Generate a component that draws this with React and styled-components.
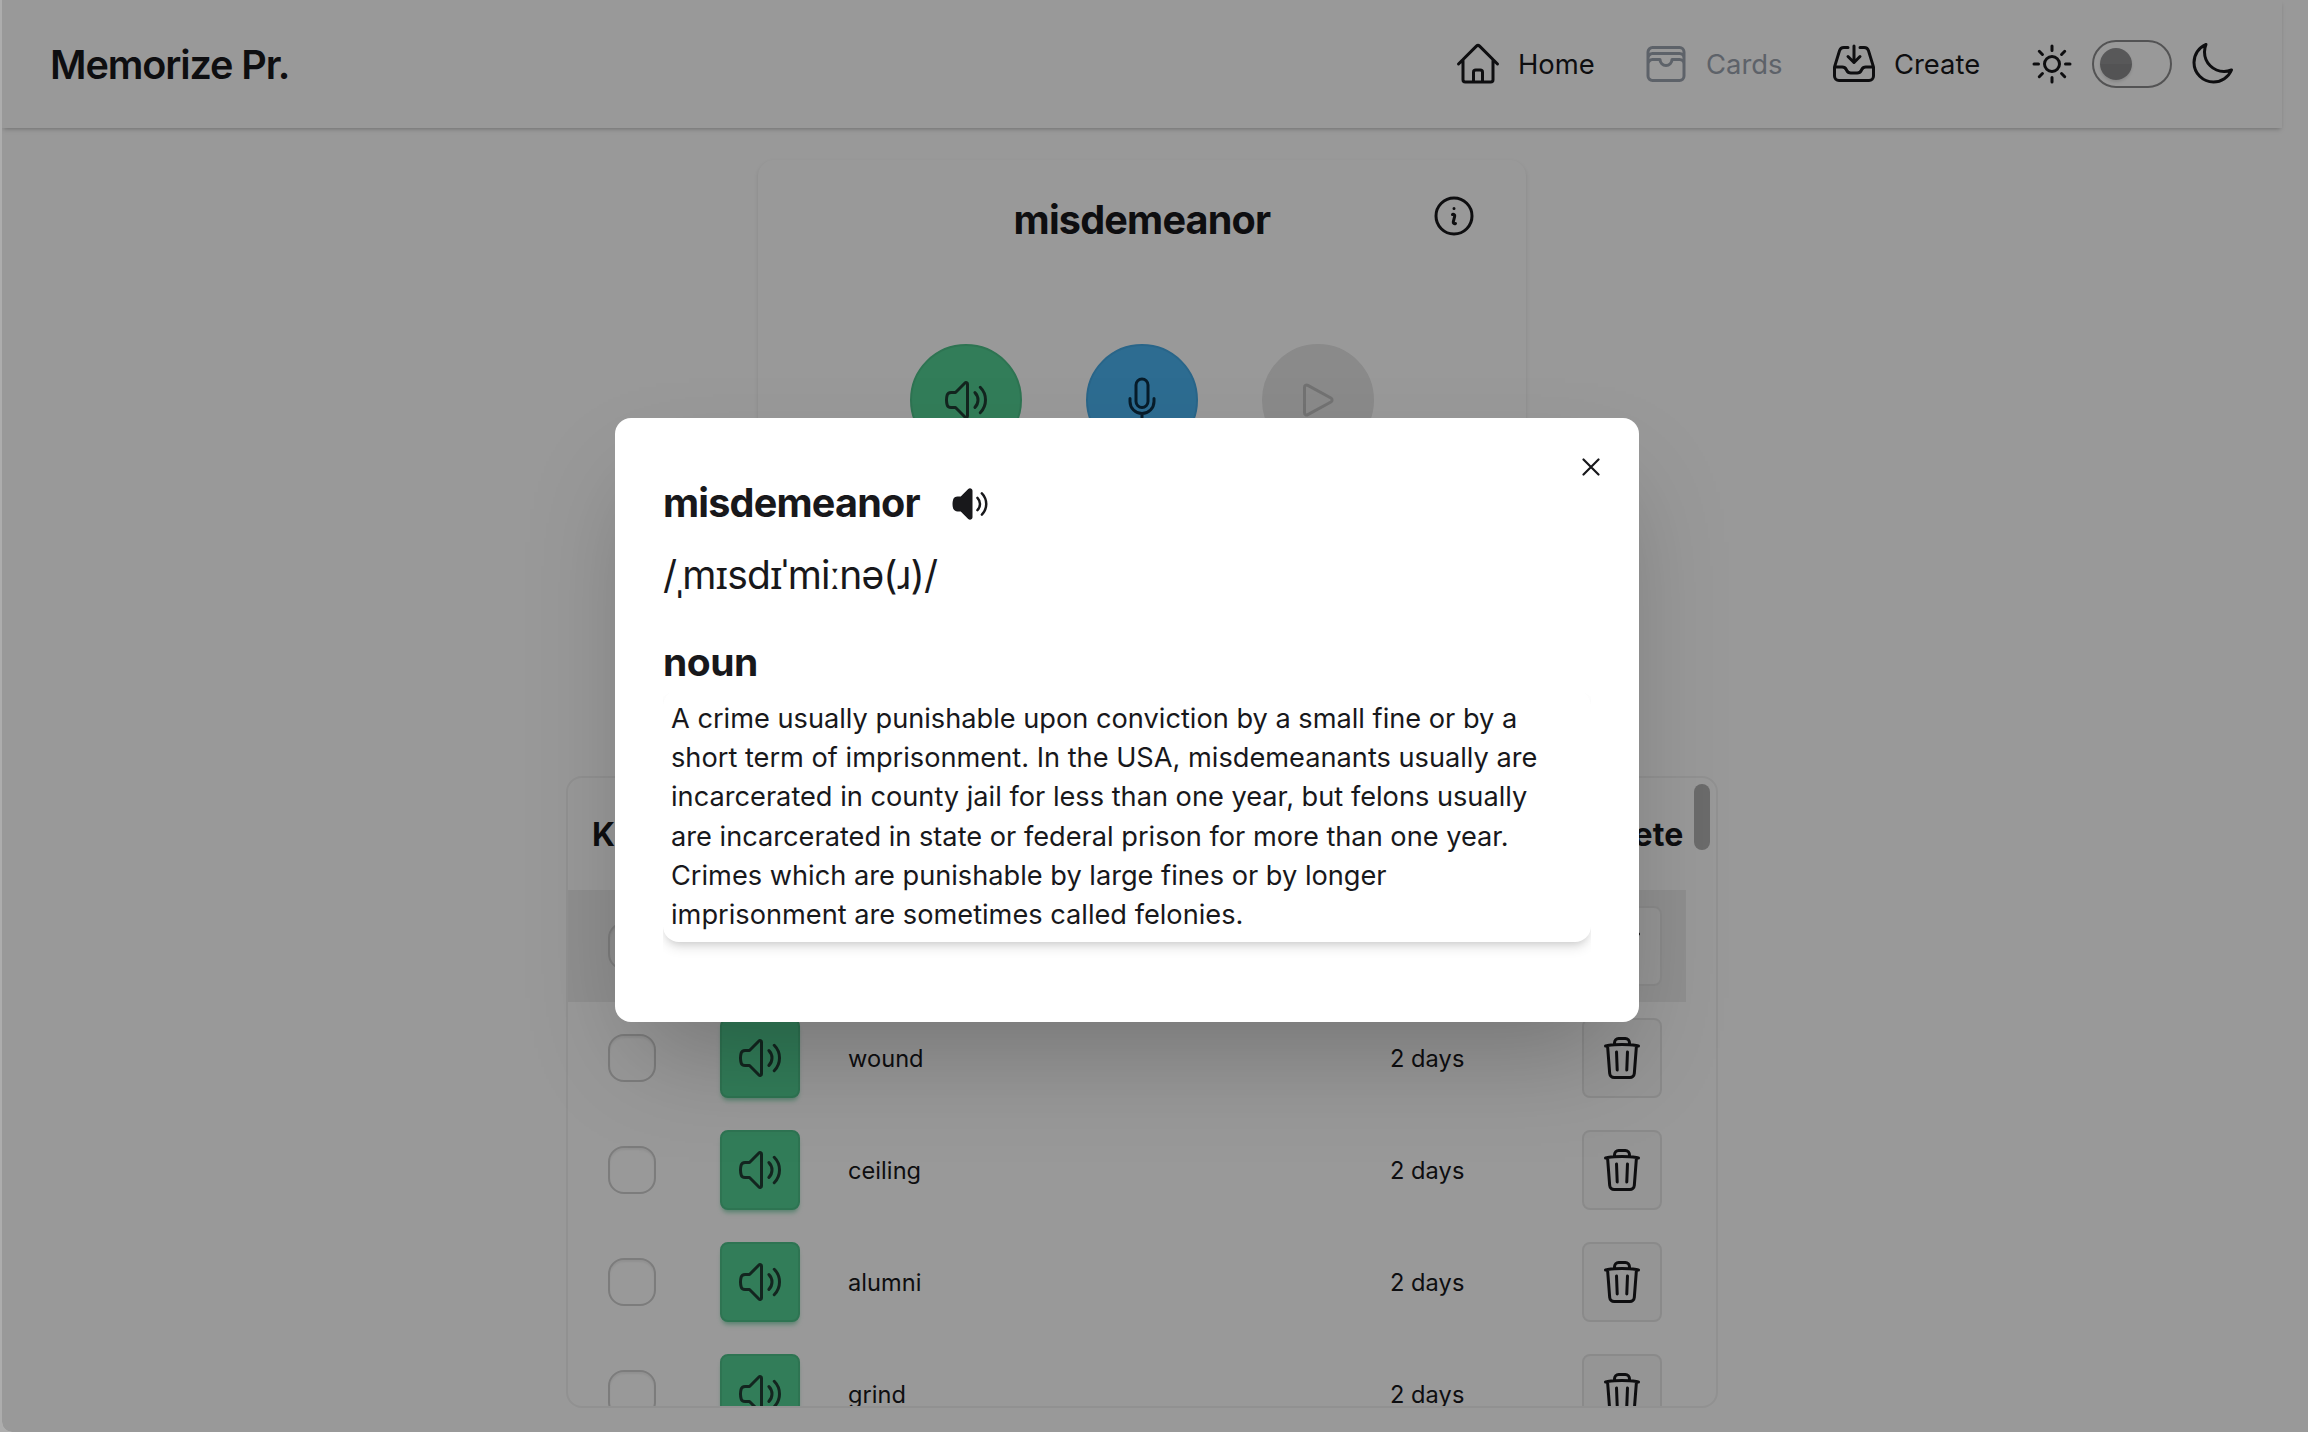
import React from "react";
import styled, { createGlobalStyle } from "styled-components";
import {
  HiOutlineHome,
  HiOutlineWallet,
  HiOutlineInboxArrowDown,
  HiOutlineSun,
  HiOutlineMoon,
  HiOutlineInformationCircle,
  HiOutlineSpeakerWave,
  HiOutlineMicrophone,
  HiOutlinePlay,
  HiOutlineTrash,
  HiSpeakerWave,
} from "react-icons/hi2";

const GlobalStyle = createGlobalStyle`
  *, *::before, *::after { box-sizing: border-box; }
  body {
    margin: 0;
    background: #adadad;
    color: #18181b;
    font-family: Inter, "Noto Sans", sans-serif;
    overflow: hidden;
  }
  h1, h2, h3, p { margin: 0; }
  button { font: inherit; color: inherit; padding: 0; }
  svg { display: block; flex: none; }
`;

const Window = styled.div`
  position: relative;
  margin-left: 2px;
  height: 1432px;
  overflow: hidden;
  background: #fff;
  border-bottom-left-radius: 10px;
`;

const Page = styled.div`
  width: 2280px;
  height: 100%;
  display: flex;
  flex-direction: column;
  align-items: center;
`;

const Navbar = styled.header`
  align-self: stretch;
  height: 128px;
  flex: none;
  display: flex;
  align-items: center;
  justify-content: space-between;
  padding: 0 46px 0 48px;
  box-shadow: 0 3px 5px -1px rgba(0, 0, 0, 0.12),
    0 2px 4px -2px rgba(0, 0, 0, 0.2);
`;

const Brand = styled.h1`
  padding-top: 2px;
  font-size: 39.6px;
  line-height: 56px;
  font-weight: 600;
  letter-spacing: -1.1px;
`;

const Menu = styled.nav`
  display: flex;
  align-items: center;
  gap: 48px;
`;

const MenuItem = styled.a`
  display: flex;
  align-items: center;
  gap: 16px;
  width: ${(p) => p.$width}px;
  white-space: nowrap;
  font-size: 27.4px;
  line-height: 40px;
  color: ${(p) => (p.$active ? "#9ca3af" : "inherit")};
`;

const ThemeSwitch = styled.div`
  display: flex;
  align-items: center;
  gap: 16px;
`;

const Toggle = styled.div`
  width: 80px;
  height: 48px;
  padding: 6px;
  border: 2px solid #8b8b8c;
  border-radius: 24px;
`;

const Knob = styled.div`
  width: 32px;
  height: 32px;
  border-radius: 50%;
  background: linear-gradient(#939395 50%, #8b8b8d 50%);
  box-shadow: 0 2px 3px rgba(0, 0, 0, 0.12);
`;

const WordCard = styled.section`
  width: 768px;
  height: 560px;
  flex: none;
  margin-top: 32px;
  padding: 32px 48px;
  border-radius: 16px;
  box-shadow: 0 2px 4px rgba(0, 0, 0, 0.12);
  display: flex;
  flex-direction: column;
`;

const WordHeader = styled.div`
  display: grid;
  grid-template-columns: 48px 1fr 48px;
  align-items: start;
  height: 152px;
`;

const Word = styled.h2`
  font-size: 39.6px;
  line-height: 56px;
  letter-spacing: -0.8px;
  font-weight: 700;
  text-align: center;
  grid-column: 2;
`;

const Actions = styled.div`
  display: flex;
  justify-content: center;
  gap: 64px;
`;

const tones = {
  success: ["#54d095", "#4dc189", "#213f34"],
  info: ["#4cb5f2", "#45a9e4", "#0d2f46"],
  disabled: ["#e6e6e6", "#e6e6e6", "#bebebe"],
  neutral: ["#f8f8f8", "#e7e7e7", "#18181b"],
};

const ToneButton = styled.button`
  display: flex;
  align-items: center;
  justify-content: center;
  background: ${(p) => tones[p.$tone][0]};
  border: 2px solid ${(p) => tones[p.$tone][1]};
  color: ${(p) => tones[p.$tone][2]};
`;

const RoundButton = styled(ToneButton)`
  width: 112px;
  height: 112px;
  border-radius: 50%;
`;

const SquareButton = styled(ToneButton)`
  width: 80px;
  height: 80px;
  border-radius: 8px;
  box-shadow: ${(p) =>
    p.$tone === "success"
      ? "0 5px 5px -2px rgba(84, 208, 149, 0.4), 0 3px 4px -2px rgba(60, 160, 112, 0.4)"
      : "none"};
`;

const ListCard = styled.section`
  width: 1152px;
  height: 632px;
  flex: none;
  margin-top: 56px;
  border: 2px solid #f2f2f2;
  border-radius: 16px;
  overflow: hidden;
  display: flex;
  justify-content: space-between;
`;

const Table = styled.div`
  width: 1118px;
`;

const HeadRow = styled.div`
  display: grid;
  grid-template-columns: 990px 128px;
  align-items: center;
  height: 112px;
  padding-left: 24px;
  font-size: 32px;
  letter-spacing: 0.2px;
  font-weight: 700;
`;

const Row = styled.div`
  display: grid;
  grid-template-columns: 128px 128px 542px 192px 128px;
  align-items: center;
  height: 112px;
  background: ${(p) => (p.$selected ? "#eeeeee" : "transparent")};
`;

const Cell = styled.div`
  padding-left: ${(p) => p.$inset ?? 24}px;
`;

const TextCell = styled(Cell)`
  padding-top: 2px;
  font-size: 23.6px;
  line-height: 32px;
  letter-spacing: 0.05px;
`;

const Check = styled.div`
  width: 48px;
  height: 48px;
  border: 2px solid #cfcfcf;
  border-radius: 16px;
  box-shadow: inset 0 2px 2px rgba(0, 0, 0, 0.06);
`;

const ScrollTrack = styled.div`
  width: 22px;
  padding-top: 6px;
`;

const ScrollThumb = styled.div`
  width: 16px;
  height: 66px;
  border-radius: 8px;
  background: #b2b2b2;
`;

const Backdrop = styled.div`
  position: absolute;
  inset: 0;
  background: rgba(0, 0, 0, 0.4);
  padding: 418px 0 0 613px;
`;

const Modal = styled.div`
  position: relative;
  width: 1024px;
  height: 604px;
  padding: 48px;
  background: #fff;
  border-radius: 16px;
  box-shadow: 0 50px 100px -24px rgba(0, 0, 0, 0.25);
`;

const CloseButton = styled.button`
  position: absolute;
  top: 17px;
  right: 16px;
  width: 64px;
  height: 64px;
  border: 0;
  background: none;
  display: flex;
  align-items: center;
  justify-content: center;
`;

const ModalTitle = styled.div`
  display: flex;
  align-items: flex-start;
  gap: 30px;
  height: 80px;
  padding-top: 9px;

  svg {
    margin-top: 9px;
  }
`;

const Phonetic = styled.p`
  padding-top: 1px;
  font-size: 39px;
  line-height: 56px;
  letter-spacing: -0.85px;
  white-space: nowrap;
`;

const PartOfSpeech = styled.h3`
  margin-top: 31px;
  font-size: 39px;
  line-height: 56px;
  letter-spacing: -0.5px;
  font-weight: 700;
`;

const DefinitionClip = styled.div`
  overflow: hidden;
  height: 280px;
`;

const Definition = styled.p`
  height: 252px;
  padding: 9px 30px 7px 8px;
  border-radius: 16px;
  font-size: 27.2px;
  line-height: 39.2px;
  box-shadow: 0 8px 12px -2px rgba(0, 0, 0, 0.1),
    0 4px 8px -4px rgba(0, 0, 0, 0.16);
`;

const rows = [
  { word: "", due: "", selected: true },
  { word: "wound", due: "2 days" },
  { word: "ceiling", due: "2 days" },
  { word: "alumni", due: "2 days" },
  { word: "grind", due: "2 days" },
];

function WordRow({ word, due, selected }) {
  return (
    <Row $selected={selected}>
      <Cell $inset={40}>
        <Check />
      </Cell>
      <Cell>
        <SquareButton $tone="success">
          <HiOutlineSpeakerWave size={48} />
        </SquareButton>
      </Cell>
      <TextCell>{word}</TextCell>
      <TextCell>{due}</TextCell>
      <Cell>
        <SquareButton $tone="neutral">
          <HiOutlineTrash size={48} />
        </SquareButton>
      </Cell>
    </Row>
  );
}

export default function App() {
  return (
    <>
      <GlobalStyle />
      <Window>
        <Page>
          <Navbar>
            <Brand>Memorize Pr.</Brand>
            <Menu>
              <MenuItem $width={140}>
                <HiOutlineHome size={48} />
                Home
              </MenuItem>
              <MenuItem $width={140} $active>
                <HiOutlineWallet size={48} />
                Cards
              </MenuItem>
              <MenuItem $width={150}>
                <HiOutlineInboxArrowDown size={48} />
                Create
              </MenuItem>
              <ThemeSwitch>
                <HiOutlineSun size={48} />
                <Toggle>
                  <Knob />
                </Toggle>
                <HiOutlineMoon size={48} />
              </ThemeSwitch>
            </Menu>
          </Navbar>

          <WordCard>
            <WordHeader>
              <Word>misdemeanor</Word>
              <HiOutlineInformationCircle size={48} />
            </WordHeader>
            <Actions>
              <RoundButton $tone="success">
                <HiOutlineSpeakerWave size={48} />
              </RoundButton>
              <RoundButton $tone="info">
                <HiOutlineMicrophone size={48} />
              </RoundButton>
              <RoundButton $tone="disabled">
                <HiOutlinePlay size={48} />
              </RoundButton>
            </Actions>
          </WordCard>

          <ListCard>
            <Table>
              <HeadRow>
                <span>K</span>
                <span>Delete</span>
              </HeadRow>
              {rows.map((row, i) => (
                <WordRow key={i} {...row} />
              ))}
            </Table>
            <ScrollTrack>
              <ScrollThumb />
            </ScrollTrack>
          </ListCard>
        </Page>

        <Backdrop>
          <Modal>
            <CloseButton aria-label="Close">
              <svg width="18" height="18" viewBox="0 0 18 18">
                <path
                  d="M1.5 1.5l15 15M16.5 1.5l-15 15"
                  fill="none"
                  stroke="currentColor"
                  strokeWidth="2.2"
                  strokeLinecap="round"
                />
              </svg>
            </CloseButton>
            <ModalTitle>
              <Word as="h3">misdemeanor</Word>
              <HiSpeakerWave size={40} />
            </ModalTitle>
            <Phonetic>/ˌmɪsdɪˈmiːnə(ɹ)/</Phonetic>
            <PartOfSpeech>noun</PartOfSpeech>
            <DefinitionClip>
              <Definition>
                A crime usually punishable upon conviction by a small fine or by
                a short term of imprisonment. In the USA, misdemeanants usually
                are incarcerated in county jail for less than one year, but
                felons usually are incarcerated in state or federal prison for
                more than one year. Crimes which are punishable by large fines
                or by longer imprisonment are sometimes called felonies.
              </Definition>
            </DefinitionClip>
          </Modal>
        </Backdrop>
      </Window>
    </>
  );
}
